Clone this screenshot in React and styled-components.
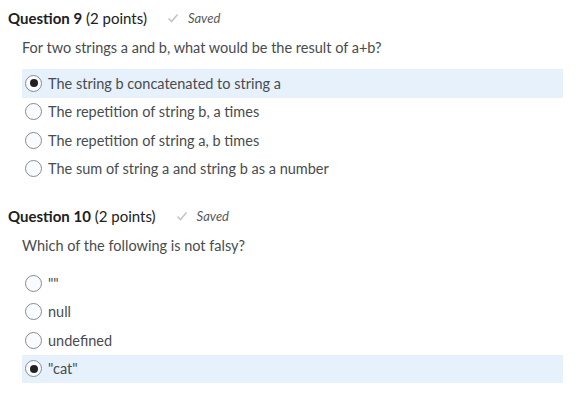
import React from "react";
import styled, { createGlobalStyle } from "styled-components";

const GlobalStyle = createGlobalStyle`
    body {
        margin: 0;
        background: #ffffff;
        font-family: Lato, "Open Sans", sans-serif;
    }
`;

const questions = [
    {
        number: 9,
        points: 2,
        prompt: "For two strings a and b, what would be the result of a+b?",
        promptGap: 5,
        options: [
            "The string b concatenated to string a",
            "The repetition of string b, a times",
            "The repetition of string a, b times",
            "The sum of string a and string b as a number"
        ],
        selected: 0
    },
    {
        number: 10,
        points: 2,
        prompt: "Which of the following is not falsy?",
        promptGap: 7,
        options: ['""', "null", "undefined", '"cat"'],
        selected: 3
    }
];

const CheckIcon = () => (
    <svg width="12" height="10" viewBox="0 0 12 10">
        <path d="M1.5 5.5 L4.5 8.5 L10.5 1.5" fill="none" stroke="#c2c5c7" strokeWidth="1.6" />
    </svg>
);

const Question = ({ q }) => (
    <StyledQuestion>
        <Header>
            <Title><b>Question {q.number}</b> ({q.points} points)</Title>
            <SavedTag>
                <CheckIcon />
                <span>Saved</span>
            </SavedTag>
        </Header>
        <Prompt>{q.prompt}</Prompt>
        <Options gap={q.promptGap}>
            {q.options.map((text, i) => (
                <Option key={text} selected={i === q.selected}>
                    <Radio selected={i === q.selected} />
                    <span>{text}</span>
                </Option>
            ))}
        </Options>
    </StyledQuestion>
);

const App = () => (
    <>
        <GlobalStyle />
        <Page>
            {questions.map(q => <Question key={q.number} q={q} />)}
        </Page>
    </>
);

export default App;

const Page = styled.div`
    width: 579px;
    padding: 5px 0 0 8px;
    box-sizing: border-box;
    display: flex;
    flex-direction: column;
    gap: 20px;
`;

const StyledQuestion = styled.section`
    display: flex;
    flex-direction: column;
`;

const Header = styled.div`
    display: flex;
    align-items: center;
    height: 26px;
    gap: 20px;
`;

const Title = styled.h2`
    margin: 0;
    font-size: 15px;
    font-weight: 400;
    color: #202122;

    b {
        font-weight: 700;
    }
`;

const SavedTag = styled.div`
    display: flex;
    align-items: center;
    gap: 9px;
    font-size: 13px;
    font-style: italic;
    color: #565a5c;
`;

const Prompt = styled.p`
    margin: 0;
    padding-left: 14px;
    height: 33px;
    display: flex;
    align-items: center;
    font-size: 14.5px;
    color: #494c4e;
`;

const Options = styled.div`
    margin: ${({ gap }) => gap}px 0 0 14px;
    width: 541px;
    display: flex;
    flex-direction: column;
`;

const Option = styled.label`
    height: 28.5px;
    display: flex;
    align-items: center;
    gap: 6px;
    padding-left: 3px;
    background: ${({ selected }) => selected ? "#e6f1fc" : "transparent"};
    font-size: 14.5px;
    color: #494c4e;
`;

const Radio = styled.span`
    width: 15px;
    height: 15px;
    border-radius: 50%;
    border: 1px solid #868c8f;
    background: #f9fbff;
    flex-shrink: 0;
    position: relative;

    &::after {
        content: "";
        display: ${({ selected }) => selected ? "block" : "none"};
        position: absolute;
        left: 3.5px;
        top: 3.5px;
        width: 8px;
        height: 8px;
        border-radius: 50%;
        background: #202122;
    }
`;
